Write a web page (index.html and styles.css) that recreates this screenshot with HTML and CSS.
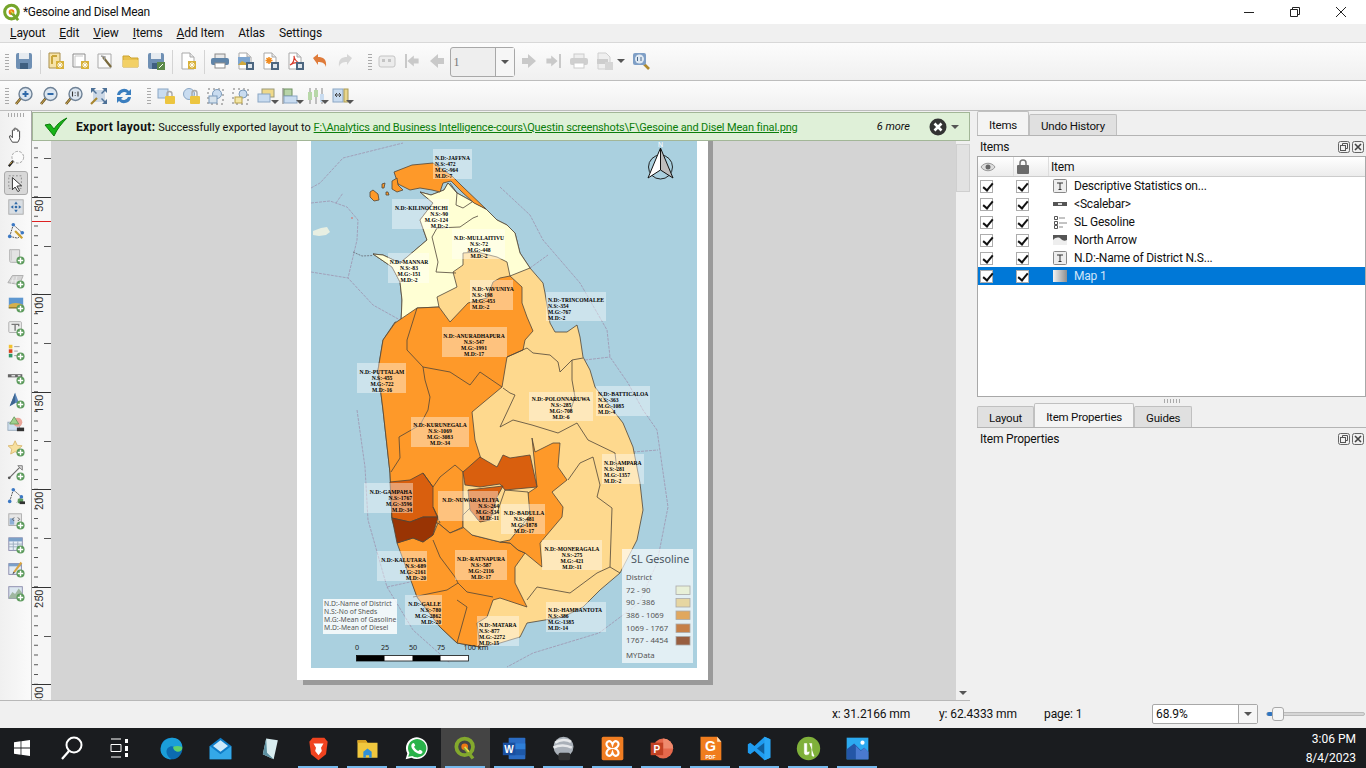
FILE: index.html
```html
<!DOCTYPE html>
<html lang="en">
<head>
    <meta charset="UTF-8">
    <title>*Gesoine and Disel Mean</title>
    <link rel="stylesheet" href="styles.css">
</head>
<body>
<svg class="defs" width="0" height="0">
    <defs>
        <symbol id="plus" viewBox="0 0 20 20"><circle cx="15" cy="15" r="4.5" fill="#5b9a5b"/><path d="M15 12v6M12 15h6" stroke="#fff" stroke-width="1.6"/></symbol>
        <symbol id="star" viewBox="0 0 20 20"><rect x="10" y="10" width="8" height="8" fill="#d8b13a"/><path d="M14 11v6M11 14h6M12 12l4 4M16 12l-4 4" stroke="#fff" stroke-width=".9"/></symbol>
        <symbol id="disk" viewBox="0 0 20 20"><rect x="2" y="2" width="16" height="16" rx="2" fill="#6f90b4"/><rect x="5" y="2" width="10" height="6" fill="#e6ebf0"/><rect x="6" y="12" width="8" height="6" fill="#3f5f80"/></symbol>
        <symbol id="badge" viewBox="0 0 20 20"><rect x="11" y="11" width="8" height="8" fill="#4c6680"/><rect x="13" y="13" width="4" height="4" fill="#dfe6ec"/></symbol>
        <symbol id="page" viewBox="0 0 20 20"><path d="M4 2h8l4 4v12H4z" fill="#fff" stroke="#a9a9a9"/><path d="M12 2v4h4" fill="#e6e6e6" stroke="#a9a9a9"/></symbol>
        <symbol id="mag" viewBox="0 0 20 20"><path d="M7 12l-5 6" stroke="#6a5220" stroke-width="2.6"/><path d="M7 12l-5 6" stroke="#d8b45a" stroke-width="1"/><circle cx="11.5" cy="8" r="6.5" fill="#dce6f0" stroke="#6f8296" stroke-width="1.4"/></symbol>
        <symbol id="arrow-l" viewBox="0 0 20 20"><path d="M3 10l8-7v4h6v6h-6v4z" fill="#c9c9c9"/></symbol>
        <symbol id="arrow-r" viewBox="0 0 20 20"><path d="M17 10L9 3v4H3v6h6v4z" fill="#c9c9c9"/></symbol>
    </defs>
</svg>

<div class="window">
    <header class="titlebar">
        <svg class="app-logo" viewBox="0 0 20 20"><circle cx="10" cy="9.5" r="7.2" fill="none" stroke="#75a52b" stroke-width="3.2"/><circle cx="10" cy="9.5" r="3" fill="#ee7913"/><path d="M10 10l7 8" stroke="#75a52b" stroke-width="3"/><path d="M9 8l3 3" stroke="#e8d94a" stroke-width="1.4"/></svg>
        <span class="title-text">*Gesoine and Disel Mean</span>
        <div class="win-controls">
            <span class="win-btn"><svg width="12" height="12"><path d="M1 6.5h10" stroke="#222"/></svg></span>
            <span class="win-btn"><svg width="12" height="12"><path d="M1.5 3.5h7v7h-7zM3.500 3.500v-2h7v7h-2" fill="none" stroke="#222"/></svg></span>
            <span class="win-btn"><svg width="12" height="12"><path d="M1 1l10 10M11 1L1 11" stroke="#222"/></svg></span>
        </div>
    </header>

    <nav class="menubar">
        <span><u>L</u>ayout</span>
        <span><u>E</u>dit</span>
        <span><u>V</u>iew</span>
        <span><u>I</u>tems</span>
        <span><u>A</u>dd Item</span>
        <span>Atlas</span>
        <span>Settings</span>
    </nav>

    <div class="toolbar tall">
        <i class="grip"></i>
        <span class="tool"><svg class="ico"><use href="#disk"/></svg></span>
        <i class="sep"></i>
        <span class="tool"><svg class="ico" viewBox="0 0 20 20"><path d="M3 2h11v15H3z" fill="#f6e3a8" stroke="#a98f4c"/><path d="M6 5v8M6 5h5" stroke="#caa63a" stroke-width="2"/><use href="#star" width="20" height="20"/></svg></span>
        <span class="tool"><svg class="ico" viewBox="0 0 20 20"><path d="M2 3h12v13H2z" fill="#fff" stroke="#8c8c8c"/><path d="M4 15V5h8" stroke="#c8c8c8" fill="none"/><use href="#star" width="20" height="20"/></svg></span>
        <span class="tool"><svg class="ico" viewBox="0 0 20 20"><path d="M2 3h13v14H2z" fill="#fbfbfb" stroke="#a9a9a9"/><path d="M7 6l8 10" stroke="#7a6a3c" stroke-width="2.2"/><path d="M5 5l4 1-1 3" fill="none" stroke="#9a9a9a" stroke-width="1.5"/></svg></span>
        <span class="tool"><svg class="ico" viewBox="0 0 20 20"><path d="M2 5h6l2 2h7v9H2z" fill="#e9c24f" stroke="#cda32f"/><path d="M2 9h15v7H2z" fill="#f2d066"/></svg></span>
        <span class="tool"><svg class="ico" viewBox="0 0 20 20"><use href="#disk" width="20" height="20"/><rect x="11" y="11" width="8" height="8" fill="#5c8a4a"/><path d="M13 17l4-4" stroke="#fff"/></svg></span>
        <i class="sep"></i>
        <span class="tool"><svg class="ico" viewBox="0 0 20 20"><use href="#page" width="20" height="20"/><use href="#star" width="20" height="20"/></svg></span>
        <i class="sep"></i>
        <span class="tool"><svg class="ico" viewBox="0 0 20 20"><rect x="5" y="3" width="10" height="5" fill="#e8e8e8" stroke="#8a8a8a"/><rect x="1" y="7" width="18" height="7" rx="2" fill="#5f84a8"/><rect x="5" y="12" width="10" height="5" fill="#fff" stroke="#8a8a8a"/></svg></span>
        <span class="tool"><svg class="ico" viewBox="0 0 20 20"><use href="#page" width="20" height="20"/><rect x="3" y="6" width="12" height="8" fill="#7fa6d0"/><path d="M3 14l4-4 4 2 4-1v3z" fill="#cfa93f"/><use href="#badge" width="20" height="20"/></svg></span>
        <span class="tool"><svg class="ico" viewBox="0 0 20 20"><use href="#page" width="20" height="20"/><path d="M9 6v7M5.500 9.500h7M6.500 7l5 5M11.500 7l-5 5" stroke="#f08a1d" stroke-width="1.500"/><use href="#badge" width="20" height="20"/></svg></span>
        <span class="tool"><svg class="ico" viewBox="0 0 20 20"><use href="#page" width="20" height="20"/><path d="M5 14c3-1 5-6 4-9 0 3 3 6 5 7-3-1-6 0-9 2z" fill="none" stroke="#d83a2a" stroke-width="1.200"/><use href="#badge" width="20" height="20"/></svg></span>
        <span class="tool"><svg class="ico" viewBox="0 0 20 20"><path d="M3 7l5-4v3c5 0 9 2 8 10-1-4-4-5-8-5v3z" fill="#df7b3a"/></svg></span>
        <span class="tool"><svg class="ico" viewBox="0 0 20 20"><path d="M17 7l-5-4v3c-5 0-9 2-8 10 1-4 4-5 8-5v3z" fill="#d6d6d6"/></svg></span>
        <i class="grip wide"></i>
        <span class="tool"><svg class="ico" viewBox="0 0 20 20"><rect x="2" y="5" width="16" height="11" rx="2" fill="#ececec" stroke="#c4c4c4"/><path d="M5 8h3v3H5zM11 8h3v3h-3z" fill="#c4c4c4"/></svg></span>
        <span class="tool"><svg class="ico" viewBox="0 0 20 20"><rect x="3" y="3" width="2" height="14" fill="#c9c9c9"/><use href="#arrow-l" x="3" width="16" height="20"/></svg></span>
        <span class="tool"><svg class="ico"><use href="#arrow-l"/></svg></span>
        <div class="page-spin"><span class="spin-value">1</span><span class="spin-drop"><i class="caret"></i></span></div>
        <span class="tool"><svg class="ico"><use href="#arrow-r"/></svg></span>
        <span class="tool"><svg class="ico" viewBox="0 0 20 20"><use href="#arrow-r" x="0" width="16" height="20"/><rect x="15" y="3" width="2" height="14" fill="#c9c9c9"/></svg></span>
        <span class="tool"><svg class="ico" viewBox="0 0 20 20"><rect x="5" y="3" width="10" height="5" fill="#eee" stroke="#ccc"/><rect x="1" y="7" width="18" height="7" rx="2" fill="#cfcfcf"/><rect x="5" y="12" width="10" height="5" fill="#fff" stroke="#ccc"/></svg></span>
        <span class="tool with-caret"><svg class="ico" viewBox="0 0 20 20"><path d="M4 2h8l4 4v12H4z" fill="#efefef" stroke="#cfcfcf"/><rect x="3" y="8" width="11" height="5" fill="#cdcdcd"/><rect x="11" y="11" width="8" height="8" fill="#d5d5d5"/></svg><i class="caret"></i></span>
        <span class="tool"><svg class="ico" viewBox="0 0 20 20"><path d="M11 11l7 7" stroke="#b08a2e" stroke-width="2.600"/><rect x="2" y="2" width="13" height="12" rx="2" fill="#7f9fc6"/><circle cx="8.500" cy="8" r="4.500" fill="#dfe9f3"/><path d="M6.500 6v4M10 6v4" stroke="#4c6a8c"/></svg></span>
    </div>

    <div class="toolbar">
        <i class="grip"></i>
        <span class="tool"><svg class="ico" viewBox="0 0 20 20"><use href="#mag" width="20" height="20"/><path d="M11.500 5v6M8.500 8h6" stroke="#2e68a8" stroke-width="2"/></svg></span>
        <span class="tool"><svg class="ico" viewBox="0 0 20 20"><use href="#mag" width="20" height="20"/><path d="M8.500 8h6" stroke="#2e68a8" stroke-width="2"/></svg></span>
        <span class="tool"><svg class="ico" viewBox="0 0 20 20"><use href="#mag" width="20" height="20"/><path d="M8.500 5.500v5M14 5.500v5M11.200 6.500v.8M11.200 9v.8" stroke="#333" stroke-width="1.100"/></svg></span>
        <span class="tool"><svg class="ico" viewBox="0 0 20 20"><rect x="4" y="4" width="12" height="12" fill="#ccd8e6"/><path d="M2 7V2h5l-2 2 3 3-1 1-3-3zM18 7V2h-5l2 2-3 3 1 1 3-3zM18 13v5h-5l2-2-3-3 1-1 3 3z" fill="#4d7197"/><path d="M8 12l-6 6" stroke="#a8862e" stroke-width="2.200"/></svg></span>
        <span class="tool"><svg class="ico" viewBox="0 0 20 20"><path d="M3 9a7 7 0 0 1 12-4l2-2v6h-6l2-2a4.500 4.500 0 0 0-7 2zM17 11a7 7 0 0 1-12 4l-2 2v-6h6l-2 2a4.500 4.500 0 0 0 7-2z" fill="#3a7ebf"/></svg></span>
        <i class="grip wide"></i>
        <span class="tool"><svg class="ico" viewBox="0 0 20 20"><rect x="2" y="3" width="10" height="9" fill="#c9dcf0" stroke="#8aa6c4"/><path d="M11 10V8a2.500 2.500 0 0 1 5 0v2" fill="none" stroke="#a9a9a9" stroke-width="1.400"/><rect x="9" y="10" width="10" height="8" rx="1" fill="#ecc53f"/></svg></span>
        <span class="tool"><svg class="ico" viewBox="0 0 20 20"><circle cx="8" cy="8" r="5.500" fill="#c9dcf0" stroke="#8aa6c4"/><path d="M11 10V7a2.500 2.500 0 0 1 5 0v3" fill="none" stroke="#a9a9a9" stroke-width="1.400"/><rect x="9" y="10" width="10" height="8" rx="1" fill="#ecc53f"/></svg></span>
        <span class="tool"><svg class="ico" viewBox="0 0 20 20"><rect x="2" y="3" width="15" height="15" fill="none" stroke="#777" stroke-dasharray="2 3"/><circle cx="11" cy="8" r="4.500" fill="#c9dcf0" stroke="#7b9abb"/><rect x="3" y="10" width="8" height="7" fill="#d6e2ec" stroke="#7b9abb"/></svg></span>
        <span class="tool"><svg class="ico" viewBox="0 0 20 20"><rect x="2" y="3" width="15" height="15" fill="none" stroke="#777" stroke-dasharray="2 3"/><circle cx="12" cy="8" r="4" fill="#c9dcf0" stroke="#7b9abb"/><rect x="4" y="11" width="7" height="6" fill="#f3e6a6" stroke="#b9a24b"/></svg></span>
        <span class="tool with-caret"><svg class="ico" viewBox="0 0 20 20"><rect x="6" y="3" width="12" height="8" fill="#efd98a" stroke="#9a9a7a"/><rect x="2" y="8" width="12" height="8" fill="#c9dcf0" stroke="#8aa6c4"/></svg><i class="caret"></i></span>
        <span class="tool with-caret"><svg class="ico" viewBox="0 0 20 20"><path d="M2 2v16" stroke="#777"/><rect x="3" y="3" width="8" height="7" fill="#b8d4a8" stroke="#6f9060"/><rect x="3" y="10" width="13" height="7" fill="#c9dcf0" stroke="#8aa6c4"/></svg><i class="caret"></i></span>
        <span class="tool with-caret"><svg class="ico" viewBox="0 0 20 20"><path d="M4 2v16M10 2v16M16 2v16" stroke="#888"/><rect x="2" y="6" width="4" height="8" fill="#b8d8a8"/><rect x="8" y="4" width="4" height="7" fill="#b8d8a8"/><rect x="14" y="8" width="4" height="8" fill="#c9dcf0"/></svg><i class="caret"></i></span>
        <span class="tool with-caret"><svg class="ico" viewBox="0 0 20 20"><rect x="2" y="3" width="10" height="13" fill="#c9dcf0" stroke="#8aa6c4"/><rect x="13" y="3" width="4" height="13" fill="#e9d68c" stroke="#a99a55"/><path d="M4 9h6M8 7l2 2-2 2M6 7L4 9l2 2" fill="none" stroke="#444"/></svg><i class="caret"></i></span>
    </div>

    <div class="workspace">
        <aside class="left-tools">
            <i class="grip-h"></i>
            <span class="vtool"><svg class="ico" viewBox="0 0 20 20"><path d="M6 18c-2-3-4-6-3-7s2 1 3 2V5c0-1 2-1 2 0V3c0-1 2-1 2 0v1c0-1 2-1 2 0v2c0-1 2-1 2 0v7c0 2-1 3-2 5z" fill="#fff" stroke="#333"/></svg></span>
            <span class="vtool"><svg class="ico" viewBox="0 0 20 20"><path d="M7 12l-5 6" stroke="#222" stroke-width="2.400"/><circle cx="12" cy="8" r="6.500" fill="#fafafa" stroke="#999" stroke-dasharray="3 1.500"/><path d="M3 16l3-3" stroke="#d8a73a"/></svg></span>
            <span class="vtool active"><svg class="ico" viewBox="0 0 20 20"><rect x="2" y="2" width="14" height="14" fill="none" stroke="#888" stroke-dasharray="2 2"/><path d="M6 4l10 9-5 .5 3 5-2 1-3-5-3 3z" fill="#fff" stroke="#222"/></svg></span>
            <span class="vtool"><svg class="ico" viewBox="0 0 20 20"><rect x="2" y="2" width="16" height="16" fill="#d9dee3" stroke="#aaa"/><path d="M10 4l2 3H8zM10 16l2-3H8zM4 10l3-2v4zM16 10l-3-2v4z" fill="#2f6aa8"/><circle cx="10" cy="10" r="1.500" fill="#2f6aa8"/></svg></span>
            <span class="vtool"><svg class="ico" viewBox="0 0 20 20"><path d="M3 16L7 3l10 9-5 6z" fill="none" stroke="#444" stroke-dasharray="2 1"/><circle cx="3" cy="16" r="2" fill="#3b78c4"/><circle cx="7" cy="3" r="2" fill="#3b78c4"/><circle cx="17" cy="12" r="2" fill="#3b78c4"/><path d="M9 10l8 8" stroke="#caa030" stroke-width="2.500"/></svg></span>
            <span class="vtool"><svg class="ico" viewBox="0 0 20 20"><path d="M3 3h11v14H5c-2 0-2-1-2-2z" fill="#e3e3e3" stroke="#aaa"/><path d="M5 3v12" stroke="#ccc"/><use href="#plus" width="20" height="20"/></svg></span>
            <span class="vtool"><svg class="ico" viewBox="0 0 20 20"><path d="M1 13l5-8h12l-4 10z" fill="#d4d4d4" stroke="#aaa"/><path d="M4 11h11M7 7l-2 7M11 6l-2 8" stroke="#eee"/><use href="#plus" width="20" height="20"/></svg></span>
            <span class="vtool"><svg class="ico" viewBox="0 0 20 20"><rect x="2" y="3" width="16" height="12" fill="#5e97d0"/><path d="M2 11c4-3 11-3 16 0v4H2z" fill="#d6b04c"/><path d="M2 14h16" stroke="#8a7430"/><use href="#plus" width="20" height="20"/></svg></span>
            <span class="vtool"><svg class="ico" viewBox="0 0 20 20"><rect x="2" y="3" width="14" height="12" rx="1" fill="#eee" stroke="#aaa"/><path d="M5 6h8v2M9 6v7" fill="none" stroke="#777" stroke-width="1.500"/><use href="#plus" width="20" height="20"/></svg></span>
            <span class="vtool"><svg class="ico" viewBox="0 0 20 20"><rect x="2" y="2" width="4" height="4" fill="#f2c230"/><rect x="2" y="7" width="4" height="4" fill="#d9441f"/><rect x="2" y="12" width="4" height="4" fill="#2e9668"/><path d="M8 4h6M8 9h4M8 14h3" stroke="#999"/><use href="#plus" width="20" height="20"/></svg></span>
            <span class="vtool"><svg class="ico" viewBox="0 0 20 20"><rect x="1" y="8" width="16" height="3.500" fill="#666"/><path d="M5 9.700h4M12 9.700h3" stroke="#ddd" stroke-width="1.500"/><use href="#plus" width="20" height="20"/></svg></span>
            <span class="vtool"><svg class="ico" viewBox="0 0 20 20"><path d="M3 17L9 2l5 13-4-2z" fill="#5a86bb"/><path d="M9 2v11l-6 4z" fill="#3e658f"/><use href="#plus" width="20" height="20"/></svg></span>
            <span class="vtool"><svg class="ico" viewBox="0 0 20 20"><rect x="1" y="8" width="13" height="9" fill="#cfe0f0" stroke="#9ab"/><circle cx="12" cy="8" r="5" fill="#eaa79a"/><path d="M8 2l5 8H3z" fill="#9fd08e" stroke="#6d9c5c"/><rect x="11" y="14" width="8" height="4" fill="#333"/></svg></span>
            <span class="vtool"><svg class="ico" viewBox="0 0 20 20"><path d="M9 2l2.300 5 5.500.6-4.100 3.700 1.200 5.400L9 14l-4.900 2.700 1.200-5.400L1.200 7.600 6.700 7z" fill="#f7e0a0" stroke="#d9b870"/><use href="#plus" width="20" height="20"/></svg></span>
            <span class="vtool"><svg class="ico" viewBox="0 0 20 20"><path d="M2 17L15 4" stroke="#666" stroke-width="1.200"/><circle cx="2.500" cy="16.500" r="1.500" fill="#555"/><path d="M12 3h5v5z" fill="#ddd" stroke="#777"/><use href="#plus" width="20" height="20"/></svg></span>
            <span class="vtool"><svg class="ico" viewBox="0 0 20 20"><path d="M3 16L7 3l9 8-5 6" fill="none" stroke="#444" stroke-dasharray="2 1"/><circle cx="3" cy="16" r="2" fill="#3b78c4"/><circle cx="7" cy="3" r="2" fill="#3b78c4"/><circle cx="16" cy="11" r="2" fill="#3b78c4"/><rect x="12" y="13" width="6" height="5" fill="#5b9a5b"/><rect x="14" y="16" width="6" height="3" fill="#333"/></svg></span>
            <span class="vtool"><svg class="ico" viewBox="0 0 20 20"><rect x="2" y="2" width="14" height="13" fill="#e6e6e6" stroke="#aaa"/><rect x="3" y="7" width="5" height="7" fill="#8fb0d6"/><path d="M8 6L6 8l2 2M12 6l2 2-2 2" fill="none" stroke="#555"/><use href="#plus" width="20" height="20"/></svg></span>
            <span class="vtool"><svg class="ico" viewBox="0 0 20 20"><rect x="2" y="2" width="15" height="14" fill="#e9f0f7" stroke="#88a"/><rect x="2" y="2" width="15" height="4" fill="#7ba0c8"/><path d="M2 9h15M2 12h15M7 6v10M12 6v10" stroke="#9ab"/><use href="#plus" width="20" height="20"/></svg></span>
            <span class="vtool"><svg class="ico" viewBox="0 0 20 20"><rect x="2" y="4" width="14" height="12" fill="#e2ebf4" stroke="#88a"/><rect x="2" y="4" width="14" height="3" fill="#7ba0c8"/><path d="M7 13L15 2l2 1.500L9 14z" fill="#d9a441"/><path d="M7 13l-1 3 3-2z" fill="#555"/><use href="#plus" width="20" height="20"/></svg></span>
            <span class="vtool"><svg class="ico" viewBox="0 0 20 20"><rect x="2" y="3" width="15" height="13" fill="#dbe6ef" stroke="#88a"/><path d="M2 15l4-6 3 2 4-6 4 5v6H2z" fill="#9fb7a0"/><use href="#plus" width="20" height="20"/></svg></span>
        </aside>

        <main class="center">
            <div class="msgbar">
                <svg class="msg-check" viewBox="0 0 24 20"><path d="M1 8l5-1 4 5C13 7 18 3 23 1 18 6 13 12 10 19z" fill="#18b418" stroke="#0b7d0b"/></svg>
                <span class="msg-text"><b>Export layout:</b> Successfully exported layout to <a class="msg-link">F:\Analytics and Business Intelligence-cours\Questin screenshots\F\Gesoine and Disel Mean final.png</a></span>
                <em class="msg-more">6 more</em>
                <svg class="msg-close" viewBox="0 0 18 18"><circle cx="9" cy="9" r="8.500" fill="#333"/><path d="M5.500 5.500l7 7M12.500 5.500l-7 7" stroke="#fff" stroke-width="2.600"/></svg>
                <i class="caret"></i>
            </div>
            <div class="view">
                <svg class="ruler" viewBox="32 141 19 559">
                    <defs>
                        <pattern id="ticks" width="19" height="9.750" y="1.250" patternUnits="userSpaceOnUse"><rect x="15" width="4" height="1" fill="#555"/></pattern>
                    </defs>
                    <rect x="32" y="141" width="19" height="559" fill="#f6f6f6"/>
                    <rect x="32" y="141" width="19" height="559" fill="url(#ticks)"/>
                    <path d="M32 197.500h19M32 294.500h19M32 392.500h19M32 489.500h19M32 587.500h19M32 684.500h19" stroke="#333"/>
                    <path d="M44 246.500h7M44 343.500h7M44 441.500h7M44 538.500h7M44 636.500h7M44 158.500h7" stroke="#555"/>
                    <path d="M32 221.500h19" stroke="#d22"/>
                    <g class="ruler-num">
                        <text transform="translate(43 199.500) rotate(-90)">50</text>
                        <text transform="translate(43 296.500) rotate(-90)">100</text>
                        <text transform="translate(43 394.500) rotate(-90)">150</text>
                        <text transform="translate(43 491.500) rotate(-90)">200</text>
                        <text transform="translate(43 589.500) rotate(-90)">250</text>
                        <text transform="translate(43 686.500) rotate(-90)">300</text>
                    </g>
                </svg>

                <svg class="canvas" viewBox="51 141 905 559">
                    <rect x="303" y="141" width="410" height="544" fill="#9a9a9a"/>
                    <rect x="297" y="135" width="411" height="545" fill="#fff"/>
                    <rect x="311" y="141" width="386" height="527" fill="#aad0df"/>

                    <g class="sea-lines">
                        <path d="M311 188l9-5 23-25 24-6 36-9"/>
                        <path d="M311 203l19-2 17 6 11 13-1 20-9 38 25 27 27 15"/>
                        <path d="M311 272l37 6M336 203l7-10"/>
                        <path d="M500 187l30 28 13 25 37 43 27 47 3 27 18 26 15 27 14 20 11 77-11 56-18 40-40 30-66 20-26 14"/>
                        <path d="M530 268l18-13M585 360l25-3M633 452l25-2"/>
                        <path d="M357 410l8 57 3 53 19 67 26 43 37 33M387 587l23-5"/>
                    </g>
                    <path d="M353 252l9 4 11-.5" fill="none" stroke="#5c5c66" stroke-width=".7" stroke-dasharray="2 1"/>
                    <path d="M313 231l8-3 6-1 3 5-4 3-7 1-6-1z" fill="#e8efe2"/>
                    <circle cx="352" cy="218" r="1" fill="#c88"/>

                    <!-- island base: light orange class -->
                    <path class="dist c2" d="M444 190L448 183 457 193 486 209 497 220 507 225 515 233 520 253 530 268 543 283 545 293 550 323 555 332 567 332 577 325 580 337 583 357 590 370 595 387 623 423 633 447 640 483 643 510 637 540 620 573 600 590 583 607 563 617 527 623 520 637 500 643 480 647 457 643 440 627 417 597 400 543 392 520 390 473 383 410 378 370 383 340 395 322 401 323 402 300 400 282 392 267 373 254 383 255 400 263 427 240 420 220 433 203 420 192 431 195z"/>
                    <!-- north: pale class -->
                    <path class="dist c1" d="M444 190L448 183 457 193 486 209 497 220 507 225 515 233 520 253 530 268 510 276 507 262 497 257 477 252 463 253 463 265 453 272 457 287 437 297 439 307 417 308 412 322 401 323 402 300 400 282 392 267 373 254 383 255 400 263 427 240 420 220 433 203 420 192 431 195z"/>
                    <!-- centre and west: orange class -->
                    <path class="dist c3" d="M395 323L417 308 439 307 450 322 468 303 487 298 493 282 500 278 510 276 522 287 522 303 527 317 533 331 525 340 523 350 507 357 502 387 472 412 475 440 482 462 463 472 463 490 463 515 463 527 450 533 438 523 410 522 392 518 390 473 383 410 378 370 383 340z"/>
                    <!-- south west -->
                    <path class="dist c3" d="M397 543L413 538 423 542 433 535 438 523 450 533 465 527 472 535 500 542 510 543 518 550 525 553 515 567 515 583 527 607 500 598 493 600 487 617 477 623 480 647 457 643 440 627 417 597z"/>
                    <!-- badulla -->
                    <path class="dist c3" d="M532 438L535 452 553 443 560 443 558 467 567 480 552 492 563 507 562 517 540 543 542 567 525 553 518 550 510 543 500 542 527 523 528 493 537 487z"/>
                    <!-- kandy block, matale, gampaha, colombo -->
                    <path class="dist c2" d="M463 515L470 508 478 520 497 513 505 490 528 492 530 515 510 540 500 542 472 535 463 527z"/>
                    <path class="dist c4" d="M463 472L480 457 497 467 503 455 510 458 530 455 537 487 505 490 500 484 480 487 465 485z"/>
                    <path class="dist c4" d="M468 490L503 486 497 497 490 520 480 522 470 510z"/>
                    <path class="dist c4" d="M390 482L410 480 423 473 433 487 433 507 438 517 423 517 410 522 392 518z"/>
                    <path class="dist c5" d="M392 518L410 522 423 517 438 517 433 535 423 542 413 538 397 543z"/>

                    <g class="borders">
                        <path d="M478 216l-5 2-13 9-23 1-5 9 6 25-2 10 20 1"/>
                        <path d="M450 183l7 10-1 12 7 3 12-8"/>
                        <path d="M417 308l-10 32v10l16 17 2 13 5 17-2 13-8 15-21 12 1 21-9 14"/>
                        <path d="M423 367l27 5 20 13 10-13 22 15"/>
                        <path d="M507 357l20-9 6 5 17 2 8 7 2 10 12-12 11-2"/>
                        <path d="M572 360v20l3 17-5 15"/>
                        <path d="M503 388l7 5 5 2-7 15-8 17 13-7 19 5 26 8 19-10 11 17 27 13 2 17"/>
                        <path d="M593 457l-13 6-12 17M593 457l7 28-3 12 15 11-2 59 10 6"/>
                        <path d="M610 567l-13 6-27 20-33-6-10 13"/>
                        <path d="M423 473l10 14 7-10 15-12 8 7"/>
                        <path d="M433 507l7 16"/>
                        <path d="M433 540l7 17 15 20 3 6-11 7-34 7"/>
                        <path d="M458 583l9 9 26 5"/>
                        <path d="M457 600l10 7-5 18-5 18"/>
                    </g>

                    <!-- jaffna and the islands -->
                    <path class="dist c3" d="M394 172L412 165 433 163 452 176 462 186 486 209 474 203 462 192 451 181 443 183 440 192 432 190 420 188 410 190 398 184z"/>
                    <path class="dist c3" d="M392 181l5-3 1 7 5 5-6 2-5-3zM370 192l3-2 5 4 1 6-5 1-4-4zM382 184l3-1-1 5-2 0zM386 192l2 0 1 3-3 0z"/>

                    <g class="labels">
                        <rect x="433" y="149" width="39" height="30"/>
                        <rect x="392" y="199" width="57" height="30"/>
                        <rect x="452" y="229" width="53" height="30"/>
                        <rect x="388" y="253" width="41" height="30"/>
                        <rect x="470" y="280" width="43" height="30"/>
                        <rect x="442" y="327" width="65" height="30"/>
                        <rect x="357" y="363" width="49" height="30"/>
                        <rect x="546" y="292" width="60" height="29"/>
                        <rect x="529" y="392" width="64" height="29"/>
                        <rect x="596" y="386" width="54" height="30"/>
                        <rect x="411" y="417" width="58" height="30"/>
                        <rect x="602" y="454" width="42" height="30"/>
                        <rect x="364" y="483" width="49" height="30"/>
                        <rect x="438" y="491" width="60" height="30"/>
                        <rect x="501" y="504" width="44" height="30"/>
                        <rect x="542" y="540" width="60" height="30"/>
                        <rect x="377" y="551" width="50" height="30"/>
                        <rect x="455" y="550" width="52" height="30"/>
                        <rect x="405" y="595" width="37" height="30"/>
                        <rect x="477" y="616" width="42" height="30"/>
                        <rect x="546" y="602" width="60" height="30"/>
                    </g>

                    <g class="dlabel">
                        <text y="160"><tspan x="435">N.D:-JAFFNA</tspan><tspan x="435" dy="6">N.S:-472</tspan><tspan x="435" dy="6">M.G:-964</tspan><tspan x="435" dy="6">M.D:-7</tspan></text>
                        <text class="rt" y="210"><tspan x="448">N.D:-KILINOCHCHI</tspan><tspan x="448" dy="6">N.S:-90</tspan><tspan x="448" dy="6">M.G:-124</tspan><tspan x="448" dy="6">M.D:-2</tspan></text>
                        <text class="mid" y="240"><tspan x="479">N.D:-MULLAITIVU</tspan><tspan x="479" dy="6">N.S:-72</tspan><tspan x="479" dy="6">M.G:-448</tspan><tspan x="479" dy="6">M.D:-2</tspan></text>
                        <text class="mid" y="264"><tspan x="409">N.D:-MANNAR</tspan><tspan x="409" dy="6">N.S:-83</tspan><tspan x="409" dy="6">M.G:-151</tspan><tspan x="409" dy="6">M.D:-2</tspan></text>
                        <text y="291"><tspan x="472">N.D:-VAVUNIYA</tspan><tspan x="472" dy="6">N.S:-198</tspan><tspan x="472" dy="6">M.G:-453</tspan><tspan x="472" dy="6">M.D:-2</tspan></text>
                        <text class="mid" y="338"><tspan x="474">N.D:-ANURADHAPURA</tspan><tspan x="474" dy="6">N.S:-547</tspan><tspan x="474" dy="6">M.G:-1991</tspan><tspan x="474" dy="6">M.D:-17</tspan></text>
                        <text class="mid" y="374"><tspan x="382">N.D:-PUTTALAM</tspan><tspan x="382" dy="6">N.S:-455</tspan><tspan x="382" dy="6">M.G:-722</tspan><tspan x="382" dy="6">M.D:-16</tspan></text>
                        <text y="302"><tspan x="548">N.D:-TRINCOMALEE</tspan><tspan x="548" dy="6">N.S:-354</tspan><tspan x="548" dy="6">M.G:-767</tspan><tspan x="548" dy="6">M.D:-2</tspan></text>
                        <text class="mid" y="401"><tspan x="561">N.D:-POLONNARUWA</tspan><tspan x="561" dy="6">N.S:-285</tspan><tspan x="561" dy="6">M.G:-708</tspan><tspan x="561" dy="6">M.D:-6</tspan></text>
                        <text y="396"><tspan x="598">N.D:-BATTICALOA</tspan><tspan x="598" dy="6">N.S:-363</tspan><tspan x="598" dy="6">M.G:-1085</tspan><tspan x="598" dy="6">M.D:-4</tspan></text>
                        <text class="mid" y="427"><tspan x="440">N.D:-KURUNEGALA</tspan><tspan x="440" dy="6">N.S:-1069</tspan><tspan x="440" dy="6">M.G:-3083</tspan><tspan x="440" dy="6">M.D:-34</tspan></text>
                        <text y="465"><tspan x="604">N.D:-AMPARA</tspan><tspan x="604" dy="6">N.S:-281</tspan><tspan x="604" dy="6">M.G:-1357</tspan><tspan x="604" dy="6">M.D:-2</tspan></text>
                        <text class="rt" y="494"><tspan x="412">N.D:-GAMPAHA</tspan><tspan x="412" dy="6">N.S:-1767</tspan><tspan x="412" dy="6">M.G:-3596</tspan><tspan x="412" dy="6">M.D:-34</tspan></text>
                        <text class="rt" y="502"><tspan x="499">N.D:-NUWARA ELIYA</tspan><tspan x="499" dy="6">N.S:-264</tspan><tspan x="499" dy="6">M.G:-534</tspan><tspan x="499" dy="6">M.D:-11</tspan></text>
                        <text class="mid" y="515"><tspan x="524">N.D:-BADULLA</tspan><tspan x="524" dy="6">N.S:-481</tspan><tspan x="524" dy="6">M.G:-1878</tspan><tspan x="524" dy="6">M.D:-17</tspan></text>
                        <text class="mid" y="551"><tspan x="572">N.D:-MONERAGALA</tspan><tspan x="572" dy="6">N.S:-275</tspan><tspan x="572" dy="6">M.G:-421</tspan><tspan x="572" dy="6">M.D:-11</tspan></text>
                        <text class="rt" y="562"><tspan x="426">N.D:-KALUTARA</tspan><tspan x="426" dy="6">N.S:-689</tspan><tspan x="426" dy="6">M.G:-2161</tspan><tspan x="426" dy="6">M.D:-20</tspan></text>
                        <text class="mid" y="561"><tspan x="481">N.D:-RATNAPURA</tspan><tspan x="481" dy="6">N.S:-587</tspan><tspan x="481" dy="6">M.G:-2116</tspan><tspan x="481" dy="6">M.D:-17</tspan></text>
                        <text class="rt" y="606"><tspan x="441">N.D:-GALLE</tspan><tspan x="441" dy="6">N.S:-780</tspan><tspan x="441" dy="6">M.G:-2862</tspan><tspan x="441" dy="6">M.D:-20</tspan></text>
                        <text y="627"><tspan x="479">N.D:-MATARA</tspan><tspan x="479" dy="6">N.S:-877</tspan><tspan x="479" dy="6">M.G:-2272</tspan><tspan x="479" dy="6">M.D:-15</tspan></text>
                        <text y="612"><tspan x="548">N.D:-HAMBANTOTA</tspan><tspan x="548" dy="6">N.S:-386</tspan><tspan x="548" dy="6">M.G:-1385</tspan><tspan x="548" dy="6">M.D:-14</tspan></text>
                    </g>

                    <!-- north arrow -->
                    <circle cx="660.500" cy="167" r="12" fill="none" stroke="#111" stroke-width=".9"/>
                    <path d="M660.500 148L648 178l12.500-8z" fill="#fff" stroke="#111"/>
                    <path d="M660.500 148L673 178l-12.500-8z" fill="#bdbdbd" stroke="#111"/>
                    <text class="north" x="660.500" y="147">N</text>

                    <!-- abbreviations -->
                    <rect x="323" y="599" width="74" height="35" fill="#fff" fill-opacity=".82"/>
                    <g class="abbr">
                        <text x="324" y="605.500">N.D:-Name of District</text>
                        <text x="324" y="613.500">N.S:-No of Sheds</text>
                        <text x="324" y="622">M.G:-Mean of Gasoline</text>
                        <text x="324" y="630">M.D:-Mean of Diesel</text>
                    </g>

                    <!-- scalebar -->
                    <g class="scale-num">
                        <text x="357" y="650">0</text>
                        <text x="385" y="650">25</text>
                        <text x="413" y="650">50</text>
                        <text x="441" y="650">75</text>
                        <text x="476" y="650">100 km</text>
                    </g>
                    <rect x="356.500" y="655.500" width="112" height="5.500" fill="#fff" stroke="#111" stroke-width=".8"/>
                    <rect x="356.500" y="655.500" width="28" height="5.500" fill="#000"/>
                    <rect x="412.500" y="655.500" width="28" height="5.500" fill="#000"/>

                    <!-- legend -->
                    <rect x="622" y="549" width="71" height="114" fill="#fff" fill-opacity=".66"/>
                    <g class="legend">
                        <text class="legend-title" x="631" y="563">SL Gesoline</text>
                        <text x="626" y="580">District</text>
                        <text x="626" y="593">72 - 90</text>
                        <text x="626" y="605">90 - 386</text>
                        <text x="626" y="618">386 - 1069</text>
                        <text x="626" y="631">1069 - 1767</text>
                        <text x="626" y="643">1767 - 4454</text>
                        <text x="626" y="658">MYData</text>
                    </g>
                    <g class="swatches">
                        <rect x="676" y="586" width="14" height="8.500" fill="#e8f0d8"/>
                        <rect x="676" y="598.500" width="14" height="8.500" fill="#e6d6a2"/>
                        <rect x="676" y="611" width="14" height="8.500" fill="#e0a75e"/>
                        <rect x="676" y="624" width="14" height="8.500" fill="#c68048"/>
                        <rect x="676" y="636.500" width="14" height="8.500" fill="#985e40"/>
                    </g>
                </svg>

                <div class="scrollbar">
                    <div class="scroll-thumb"></div>
                    <div class="scroll-track"></div>
                    <div class="scroll-down"><i class="caret"></i></div>
                </div>
            </div>
        </main>

        <aside class="panel">
            <div class="tabs top">
                <span class="tab active">Items</span>
                <span class="tab">Undo History</span>
            </div>
            <div class="dock-head">
                <span>Items</span>
                <span class="dock-btns">
                    <svg width="12" height="12"><rect x=".5" y=".5" width="11" height="11" rx="2" fill="none" stroke="#666"/><rect x="2.500" y="4.500" width="5" height="5" fill="none" stroke="#555"/><path d="M4.500 4.500v-2h5v5h-2" fill="none" stroke="#555"/></svg>
                    <svg width="12" height="12"><rect x=".5" y=".5" width="11" height="11" rx="2" fill="none" stroke="#666"/><path d="M3 3l6 6M9 3L3 9" stroke="#444" stroke-width="1.600"/></svg>
                </span>
            </div>
            <div class="item-table">
                <div class="item-head">
                    <span class="col-check"><svg width="16" height="12" viewBox="0 0 16 12"><path d="M1 6c3-5 11-5 14 0-3 5-11 5-14 0z" fill="#ddd" stroke="#999"/><circle cx="8" cy="6" r="2.500" fill="#666"/></svg></span>
                    <span class="col-check"><svg width="12" height="15" viewBox="0 0 12 15"><path d="M3 7V4a3 3 0 0 1 6 0v3" fill="none" stroke="#777" stroke-width="1.500"/><rect x="0" y="6" width="12" height="9" rx="1" fill="#6a6a6a"/></svg></span>
                    <span class="col-name">Item</span>
                </div>
                <div class="item-row"><span class="col-check"><i class="check"></i></span><span class="col-check"><i class="check"></i></span><span class="item-ico"><svg width="14" height="14"><rect x=".5" y=".5" width="13" height="13" rx="1" fill="#eee" stroke="#888"/><path d="M4 4h6M7 4v6.500M5.500 10.500h3" fill="none" stroke="#333"/></svg></span><span>Descriptive Statistics on...</span></div>
                <div class="item-row"><span class="col-check"><i class="check"></i></span><span class="col-check"><i class="check"></i></span><span class="item-ico"><svg width="14" height="14"><rect x="0" y="5" width="14" height="4" fill="#555"/><rect x="5" y="6" width="4" height="2" fill="#ddd"/></svg></span><span>&lt;Scalebar&gt;</span></div>
                <div class="item-row"><span class="col-check"><i class="check"></i></span><span class="col-check"><i class="check"></i></span><span class="item-ico"><svg width="14" height="14"><path d="M1.500 1.500h3v3h-3zM1.500 6.500h3v3h-3zM1.500 10.500h3v3h-3z" fill="#fff" stroke="#555"/><path d="M6 3h6M6 8h8M6 12h4" stroke="#888"/></svg></span><span>SL Gesoline</span></div>
                <div class="item-row"><span class="col-check"><i class="check"></i></span><span class="col-check"><i class="check"></i></span><span class="item-ico"><svg width="14" height="14"><rect x="0" y="2" width="14" height="10" fill="#555"/><path d="M0 7c3-3 6-3 8-1s4 2 6 1v5H0z" fill="#eee"/></svg></span><span>North Arrow</span></div>
                <div class="item-row"><span class="col-check"><i class="check"></i></span><span class="col-check"><i class="check"></i></span><span class="item-ico"><svg width="14" height="14"><rect x=".5" y=".5" width="13" height="13" rx="1" fill="#eee" stroke="#888"/><path d="M4 4h6M7 4v6.500M5.500 10.500h3" fill="none" stroke="#333"/></svg></span><span>N.D:-Name of District N.S...</span></div>
                <div class="item-row selected"><span class="col-check"><i class="check"></i></span><span class="col-check"><i class="check"></i></span><span class="item-ico"><svg width="14" height="14"><defs><linearGradient id="mapgrad"><stop offset="0" stop-color="#f2f2f2"/><stop offset="1" stop-color="#8f8f8f"/></linearGradient></defs><rect x="0" y="1" width="14" height="12" fill="url(#mapgrad)"/></svg></span><span>Map 1</span></div>
            </div>
            <i class="grip-h center-grip"></i>
            <div class="tabs bottom">
                <span class="tab">Layout</span>
                <span class="tab active">Item Properties</span>
                <span class="tab">Guides</span>
            </div>
            <div class="dock-head">
                <span>Item Properties</span>
                <span class="dock-btns">
                    <svg width="12" height="12"><rect x=".5" y=".5" width="11" height="11" rx="2" fill="none" stroke="#666"/><rect x="2.500" y="4.500" width="5" height="5" fill="none" stroke="#555"/><path d="M4.500 4.500v-2h5v5h-2" fill="none" stroke="#555"/></svg>
                    <svg width="12" height="12"><rect x=".5" y=".5" width="11" height="11" rx="2" fill="none" stroke="#666"/><path d="M3 3l6 6M9 3L3 9" stroke="#444" stroke-width="1.600"/></svg>
                </span>
            </div>
        </aside>
    </div>

    <footer class="statusbar">
        <span class="st-x">x: 31.2166 mm</span>
        <span class="st-y">y: 62.4333 mm</span>
        <span class="st-page">page: 1</span>
        <div class="zoom-combo"><span class="zoom-value">68.9%</span><span class="spin-drop"><i class="caret"></i></span></div>
        <div class="zoom-slider"><i class="slider-fill"></i><i class="slider-handle"></i></div>
    </footer>

    <div class="taskbar">
        <span class="tb-sys start"><svg width="16" height="16" viewBox="0 0 18 18"><path d="M0 2.500l7.400-1v7H0zM8.300 1.300L18 0v8.500H8.300zM0 9.500h7.400v7l-7.400-1zM8.300 9.500H18V18l-9.700-1.300z" fill="#fff"/></svg></span>
        <span class="tb-sys search"><svg width="24" height="26" viewBox="0 0 24 26"><circle cx="14" cy="10" r="7.500" fill="none" stroke="#fff" stroke-width="2"/><path d="M9 16l-7 8" stroke="#fff" stroke-width="2.200"/></svg></span>
        <span class="tb-sys tview"><svg width="18" height="20" viewBox="0 0 18 20"><path d="M1 1h10M1 6.500h10v7H1zM1 19h10" fill="none" stroke="#fff"/><path d="M15 1h3v4h-3zM15 8h3v5h-3zM15 15h3v4h-3z" fill="#fff"/></svg></span>

        <span class="tb-app"><svg viewBox="0 0 30 30"><circle cx="15" cy="15" r="13" fill="#0c6bb0"/><path d="M2 15C3 6 10 2 16 2c7 0 12 5 12 11 0 4-4 6-8 5-3-1-3-4-2-5-4-2-9 1-9 6 0 3 2 7 6 9C8 28 1 23 2 15z" fill="#1b9ed8"/><path d="M17 13c4-2 11-1 11 1 0 4-5 6-8 4-2-1-3-3-3-5z" fill="#5fd068"/></svg></span>
        <span class="tb-app"><svg viewBox="0 0 30 30"><path d="M2 12L15 2l13 10v16H2z" fill="#0f7cc7"/><path d="M2 12l13 10 13-10v16H2z" fill="#34a8e8"/><path d="M6 12L15 5l9 7-9 7z" fill="#cde9fa"/></svg></span>
        <span class="tb-app"><svg viewBox="0 0 30 30"><path d="M11 3l14 2-5 23-13-6z" fill="#d8ecef"/><path d="M11 3L7 22l13 6-8-8z" fill="#5b8fa0"/></svg></span>
        <span class="tb-app running"><svg viewBox="0 0 30 30"><path d="M8 2h14l4 5-2 15-9 7-9-7-2-15z" fill="#f0431f"/><path d="M9 9h12l-3 5 1 4-4 5-4-5 1-4z" fill="#fff"/></svg></span>
        <span class="tb-app running"><svg viewBox="0 0 30 30"><path d="M3 5h10l2 3h12v18H3z" fill="#f0c73e"/><path d="M3 5h10l2 3H3z" fill="#d8a021"/><path d="M10 19l5-4 5 4v7h-3v-3h-4v3h-3z" fill="#2f8fd8"/></svg></span>
        <span class="tb-app running"><svg viewBox="0 0 30 30"><path d="M2 28l2-7A13 13 0 1 1 9 26z" fill="#fff"/><path d="M5 25l1.500-4.500A11 11 0 1 1 10 24z" fill="#29b34a"/><path d="M10 9c2-2 3 1 3.500 2.500L12 13c1 2 3 4 5 5l2-1.500c2 .5 4 2 3 3.500-2 3-6 1-9-1-3-3-6-7-3-10z" fill="#fff"/></svg></span>
        <span class="tb-app active running"><svg viewBox="0 0 30 30"><circle cx="14" cy="13" r="10" fill="none" stroke="#83a92d" stroke-width="4.500"/><circle cx="14" cy="13" r="4" fill="#ee7913"/><path d="M14 14l10 13" stroke="#83a92d" stroke-width="4"/><path d="M14 13l5 6" stroke="#e8d94a" stroke-width="2"/></svg></span>
        <span class="tb-app running"><svg viewBox="0 0 30 30"><rect x="8" y="2" width="20" height="26" rx="1" fill="#2b6cc4"/><path d="M8 9h20v7H8z" fill="#2f7fd8"/><path d="M8 16h20v7H8z" fill="#1d58a8"/><rect x="1" y="8" width="15" height="15" fill="#1a4fa0"/><text class="tb-letter" x="8.500" y="20">W</text></svg></span>
        <span class="tb-app running"><svg viewBox="0 0 30 30"><circle cx="15" cy="13" r="12" fill="#a9b0b8"/><path d="M5 8c6-4 14-4 19-1M3 14c7-4 16-3 22 0" stroke="#e6e8ea" stroke-width="3" fill="none"/><rect x="9" y="20" width="14" height="9" rx="2" fill="#333"/></svg></span>
        <span class="tb-app running"><svg viewBox="0 0 30 30"><rect x="2" y="1" width="26" height="28" rx="2" fill="#f07d22"/><path d="M9 7c3-2 5 0 6 3 1-3 3-5 6-3 3 3 0 7-3 8 3 1 6 5 3 8-3 2-5 0-6-3-1 3-3 5-6 3-3-3 0-7 3-8-3-1-6-5-3-8z" fill="none" stroke="#fff" stroke-width="2.500"/></svg></span>
        <span class="tb-app running"><svg viewBox="0 0 30 30"><circle cx="17" cy="15" r="12" fill="#e6694c"/><path d="M17 3a12 12 0 0 1 12 12H17z" fill="#ef8a6d"/><rect x="2" y="8" width="15" height="15" fill="#c24123"/><text class="tb-letter" x="9.500" y="20">P</text></svg></span>
        <span class="tb-app running"><svg viewBox="0 0 30 30"><path d="M3 1h20l5 6v22H3z" fill="#f07d1e"/><path d="M23 1l5 6h-5z" fill="#fde3c5"/><text class="tb-letter big" x="15" y="18">G</text><text class="tb-letter small" x="15" y="27">PDF</text></svg></span>
        <span class="tb-app running"><svg viewBox="0 0 30 30"><path d="M21 1l7 3v22l-7 3L9 18l-5 4-3-2v-10l3-2 5 4z" fill="#1f9cf0"/><path d="M21 8v14l-9-7z" fill="#0f5f9c"/><path d="M21 1l7 3v22l-7 3z" fill="#2aa7f5"/></svg></span>
        <span class="tb-app running"><svg viewBox="0 0 30 30"><circle cx="15" cy="15" r="14" fill="#7fb03a"/><path d="M10 9v11c0 3 3 3 5 2l1-3-2 .5c-1 0-1-1-1-2V9zM16 9h3v13c0 2 1 3 3 2" fill="#fff" stroke="#fff" stroke-width=".6"/></svg></span>
        <span class="tb-app running"><svg viewBox="0 0 30 30"><rect x="2" y="2" width="26" height="26" fill="#2caaf0"/><path d="M2 28V16l9-7 8 8 4-3 5 5v9z" fill="#2456a6"/><path d="M13 12l6 6 4-4 5 5v9H13z" fill="#4a7ad0"/><circle cx="21" cy="8" r="2.500" fill="#fff"/></svg></span>

        <div class="clock"><span>3:06 PM</span><span>8/4/2023</span></div>
    </div>
</div>
</body>
</html>
```
FILE: styles.css
```css
* {
    box-sizing: border-box;
}
body {
    margin: 0;
    font-family: Roboto, "Noto Sans", sans-serif;
    font-size: 12px;
    color: #111;
    background: #f0f0f0;
    overflow: hidden;
}
.defs {
    position: absolute;
}
.window {
    width: 1366px;
    height: 768px;
    display: flex;
    flex-direction: column;
}

/* title and menu */
.titlebar {
    height: 24px;
    background: white;
    display: flex;
    align-items: center;
    padding-left: 2px;
}
.app-logo {
    width: 19px;
    height: 19px;
}
.title-text {
    margin-left: 2px;
    letter-spacing: -.3px;
}
.win-controls {
    margin-left: auto;
    padding-right: 2px;
    display: flex;
}
.win-btn {
    width: 46px;
    height: 24px;
    display: flex;
    align-items: center;
    justify-content: center;
}
.menubar {
    height: 19px;
    display: flex;
    align-items: center;
    gap: 14px;
    padding-left: 10px;
    letter-spacing: -.1px;
    background: #f0f0f0;
    border-bottom: 1px solid #d8d8d8;
}

/* toolbars */
.toolbar {
    height: 30px;
    display: flex;
    align-items: center;
    padding-left: 5px;
    background: linear-gradient(#fcfcfc, #f0f0f0);
    border-bottom: 1px solid #bdbdbd;
}
.toolbar.tall {
    height: 38px;
}
.tall .tool {
    margin-bottom: 2px;
}
.grip {
    width: 4px;
    height: 18px;
    margin-right: 2.500px;
    flex: none;
    background: radial-gradient(#aaa 40%, transparent 45%) 0 0 / 2px 3px;
}
.grip.wide {
    margin: 0 3px 0 10px;
}
.sep {
    width: 1px;
    height: 24px;
    margin: 0 3px;
    flex: none;
    background: #d4d4d4;
}
.tool {
    width: 25px;
    height: 24px;
    flex: none;
    display: flex;
    align-items: center;
    justify-content: center;
}
.tool.with-caret {
    position: relative;
}
.with-caret .caret {
    position: absolute;
    right: 0;
    bottom: 4px;
}
.tall .with-caret {
    margin-right: 12px;
}
.tall .with-caret .caret {
    right: -9px;
    bottom: 10px;
}
.ico {
    width: 20px;
    height: 20px;
    display: block;
}
.caret {
    display: inline-block;
    width: 0;
    height: 0;
    border-left: 4px solid transparent;
    border-right: 4px solid transparent;
    border-top: 4px solid #555;
}
.page-spin {
    width: 65px;
    height: 30px;
    margin-right: 1.500px;
    flex: none;
    display: flex;
    border: 1px solid #a8a8a8;
    border-radius: 3px;
    background: #eee;
    color: #777;
    font-family: "Liberation Serif", serif;
}
.spin-value {
    flex: 1;
    padding: 7px 3px;
}
.spin-drop {
    width: 19px;
    display: flex;
    align-items: center;
    justify-content: center;
    border-left: 1px solid #a8a8a8;
    background: #f6f6f6;
}

/* main area */
.workspace {
    flex: 1;
    display: flex;
    min-height: 0;
}
.left-tools {
    width: 32px;
    flex: none;
    display: flex;
    flex-direction: column;
    align-items: center;
    padding-top: 2px;
    background: linear-gradient(90deg, #f0f0f0, #fafafa);
    border-right: 1px solid #a8a8a8;
}
.grip-h {
    width: 18px;
    height: 4px;
    display: block;
    flex: none;
    background: radial-gradient(#aaa 40%, transparent 45%) 0 0 / 3px 2px;
}
.left-tools .grip-h {
    margin-bottom: 6px;
}
.vtool {
    width: 24px;
    height: 24.100px;
    flex: none;
    display: flex;
    align-items: center;
    justify-content: center;
}
.vtool .ico {
    width: 18px;
    height: 18px;
}
.vtool.active {
    background: #d8d8d8;
    border: 1px solid #aaa;
    border-radius: 3px;
}
.center {
    flex: 1;
    min-width: 0;
    display: flex;
    flex-direction: column;
}
.msgbar {
    height: 29px;
    margin-top: 1px;
    flex: none;
    display: flex;
    align-items: center;
    padding: 0 10px 0 11px;
    background: #dff0d8;
    border: 1px solid #a2b697;
    white-space: nowrap;
}
.msg-check {
    width: 24px;
    height: 20px;
    flex: none;
}
.msg-text {
    margin-left: 8px;
    font-size: 11px;
}
.msg-text b {
    font-size: 12px;
    letter-spacing: .35px;
}
.msg-link {
    color: #0a7d0a;
    text-decoration: underline;
    letter-spacing: -.15px;
}
.msg-more {
    margin-left: auto;
    margin-right: 19px;
    font-size: 11px;
}
.msg-close {
    width: 18px;
    height: 18px;
    margin-right: 4px;
}
.view {
    flex: 1;
    display: flex;
    min-height: 0;
}
.ruler {
    width: 19px;
    height: 559px;
    flex: none;
    display: block;
}
.ruler-num text {
    font-family: Roboto, sans-serif;
    font-size: 11px;
    fill: #333;
    text-anchor: end;
}
.canvas {
    width: 905px;
    height: 559px;
    flex: none;
    display: block;
    background: #d4d4d4;
}
.scrollbar {
    width: 14px;
    flex: none;
    display: flex;
    flex-direction: column;
    padding-top: 3px;
    background: #f0f0f0;
}
.scroll-down {
    height: 15px;
    display: flex;
    align-items: center;
    justify-content: center;
}
.scroll-thumb {
    height: 48px;
    background: #e2e2e2;
    border: 1px solid #cfcfcf;
}
.scroll-track {
    flex: 1;
}

/* map drawing */
.sea-lines path {
    fill: none;
    stroke: #9a7f9f;
    stroke-width: .6;
    stroke-dasharray: 3 1;
}
.dist {
    stroke: #4f4538;
    stroke-width: .8;
}
.c1 { fill: #ffffd4; }
.c2 { fill: #fed98e; }
.c3 { fill: #fe9929; }
.c4 { fill: #d95f0e; }
.c5 { fill: #993404; }
.borders path {
    fill: none;
    stroke: #4f4538;
    stroke-width: .8;
}
.labels rect {
    fill: #fff;
    fill-opacity: .4;
}
.dlabel text {
    font-family: "Liberation Serif", serif;
    font-weight: bold;
    font-size: 5.600px;
    fill: #000;
}
.dlabel .mid {
    text-anchor: middle;
}
.dlabel .rt {
    text-anchor: end;
}
.north {
    font-family: "Liberation Sans", sans-serif;
    font-size: 7px;
    fill: #fff;
    text-anchor: middle;
}
.abbr text {
    font-family: "Noto Sans", sans-serif;
    font-size: 6.800px;
    fill: #555;
}
.scale-num text {
    font-family: "Noto Sans", sans-serif;
    font-size: 7.200px;
    fill: #222;
    text-anchor: middle;
}
.legend text {
    font-family: "Noto Sans", sans-serif;
    font-size: 7.800px;
    fill: #555;
}
.legend .legend-title {
    font-size: 10.800px;
    fill: #4a5560;
}
.swatches rect {
    stroke: #aaa;
    stroke-width: .8;
}

/* right panel */
.panel {
    width: 396px;
    flex: none;
    display: flex;
    flex-direction: column;
    padding-left: 7px;
    letter-spacing: -.2px;
    background: #f0f0f0;
}
.tabs {
    display: flex;
    align-items: flex-end;
    border-bottom: 1px solid #b4b4b4;
    font-size: 11.500px;
}
.tabs.top {
    height: 25px;
}
.tabs.bottom {
    height: 25px;
}
.tab {
    height: 21px;
    padding: 2px 11px 0;
    display: flex;
    align-items: center;
    background: #e0e0e0;
    border: 1px solid #c0c0c0;
    border-bottom: 0;
    border-radius: 2px 2px 0 0;
}
.tab.active {
    height: 24px;
    background: #f4f4f4;
}
.dock-head {
    height: 20px;
    display: flex;
    align-items: center;
    justify-content: space-between;
    padding: 2px 2px 0 3px;
}
.dock-btns {
    display: flex;
    gap: 2px;
}
.item-table {
    height: 241px;
    background: white;
    border: 1px solid #a8a8a8;
}
.item-head {
    height: 20px;
    display: flex;
    align-items: center;
    background: linear-gradient(#fff, #ececec);
    border-bottom: 1px solid #ccc;
}
.item-head .col-check {
    height: 100%;
    padding-right: 0;
    justify-content: flex-start;
    padding-left: 2px;
    border-right: 1px solid #ddd;
}
.item-head .col-check + .col-check {
    padding-left: 3px;
}
.col-check {
    width: 35.500px;
    flex: none;
    display: flex;
    align-items: center;
    justify-content: center;
    padding-right: 18px;
}
.col-name {
    padding-left: 2px;
}
.item-row {
    height: 18px;
    display: flex;
    align-items: center;
}
.item-row > span:last-child {
    margin-top: -1px;
}
.item-row.selected {
    background: #0078d7;
    color: #cfe6fa;
}
.item-ico {
    width: 25px;
    flex: none;
    padding-left: 4px;
    display: flex;
}
.check {
    width: 13px;
    height: 13px;
    display: block;
    position: relative;
    flex: none;
    background: white;
    border: 1px solid #adadad;
}
.check::after {
    content: "";
    position: absolute;
    left: 3.500px;
    top: .5px;
    width: 4px;
    height: 8px;
    border: solid #111;
    border-width: 0 2px 2px 0;
    transform: rotate(40deg);
}
.center-grip {
    margin: 2px auto 0;
}

/* status bar */
.statusbar {
    height: 28px;
    flex: none;
    display: flex;
    align-items: center;
    white-space: nowrap;
    letter-spacing: -.1px;
    background: linear-gradient(#b8b8b8, #b8b8b8) 0 0 / 970px 1px no-repeat #f0f0f0;
}
.st-x,
.st-y,
.st-page {
    flex: none;
}
.st-x {
    margin-left: 832px;
    width: 72px;
}
.st-y {
    margin-left: 35px;
    width: 72px;
}
.st-page {
    margin-left: 33px;
    width: 38px;
}
.zoom-combo {
    width: 106px;
    height: 20px;
    margin-left: 70px;
    flex: none;
    display: flex;
    background: white;
    border: 1px solid #a8a8a8;
    border-radius: 2px;
}
.zoom-value {
    flex: 1;
    padding-left: 3px;
    line-height: 18px;
}
.zoom-slider {
    width: 99px;
    height: 4px;
    margin-left: 8px;
    flex: none;
    position: relative;
    background: #d6d6d6;
    border: 1px solid #bbb;
    border-radius: 2px;
}
.slider-fill {
    position: absolute;
    left: 0;
    top: -1px;
    width: 6px;
    height: 4px;
    background: #2f74c0;
    border-radius: 2px;
}
.slider-handle {
    position: absolute;
    left: 5px;
    top: -6px;
    width: 12px;
    height: 14px;
    background: #f6f6f6;
    border: 1px solid #a8a8a8;
    border-radius: 3px;
}

/* taskbar */
.taskbar {
    height: 40px;
    flex: none;
    display: flex;
    background: #1a1c1f;
    color: white;
}
.tb-sys {
    display: flex;
    align-items: center;
    justify-content: center;
}
.start {
    width: 44px;
}
.search {
    width: 56px;
}
.tview {
    width: 38px;
}
.tb-app {
    width: 49px;
    display: flex;
    align-items: center;
    justify-content: center;
    position: relative;
}
.tview + .tb-app {
    margin-left: 9px;
}
.tb-app svg {
    width: 25px;
    height: 25px;
}
.tb-app.running::after {
    content: "";
    position: absolute;
    left: 4px;
    right: 5px;
    bottom: 0;
    height: 2px;
    background: #76b9ed;
}
.tb-app.active {
    background: #444;
}
.tb-letter {
    font-family: "Liberation Sans", sans-serif;
    font-size: 12px;
    font-weight: bold;
    fill: white;
    text-anchor: middle;
}
.tb-letter.big {
    font-size: 17px;
}
.tb-letter.small {
    font-size: 6px;
}
.clock {
    margin-left: auto;
    padding: 3px 10px 0 0;
    display: flex;
    flex-direction: column;
    align-items: flex-end;
    gap: 3px;
    line-height: 16px;
}
```
